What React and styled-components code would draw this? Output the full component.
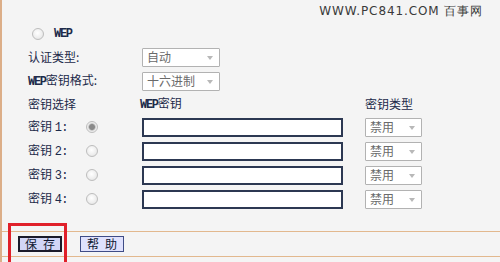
import React from "react";
import styled, { createGlobalStyle } from "styled-components";

const GlobalStyle = createGlobalStyle`
  html, body {
    margin: 0;
    padding: 0;
    background: #f4f4f4;
  }
`;

const keys = [1, 2, 3, 4];

function App() {
  return (
    <>
      <GlobalStyle />
      <Frame>
        <Watermark>WWW.PC841.COM 百事网</Watermark>
        <Form>
          <WepRow>
            <Radio />
            <Mono $bold>WEP</Mono>
          </WepRow>

          <Label $span={2}>认证类型:</Label>
          <Select $width={78}>
            <span>自动</span>
            <Arrow />
          </Select>
          <span />

          <Label $span={2}>
            <Mono $bold>WEP</Mono>密钥格式:
          </Label>
          <Select $width={78}>
            <span>十六进制</span>
            <Arrow />
          </Select>
          <span />

          <Label $span={2}>密钥选择</Label>
          <Label $shift={-2}>
            <Mono $bold>WEP</Mono>密钥
          </Label>
          <Label>密钥类型</Label>

          {keys.map((k) => (
            <React.Fragment key={k}>
              <Label>
                密钥 <Mono>{k}:</Mono>
              </Label>
              <Radio $checked={k === 1} />
              <TextInput />
              <Select $width={57}>
                <span>禁用</span>
                <Arrow />
              </Select>
            </React.Fragment>
          ))}
        </Form>
        <Footer>
          <Button $primary>保存</Button>
          <Button>帮助</Button>
        </Footer>
        <Highlight />
      </Frame>
    </>
  );
}

const Frame = styled.div`
  position: relative;
  height: 262px;
  border-left: 2px solid #dcae88;
  box-sizing: border-box;
  font-family: "Noto Sans CJK SC", "DejaVu Sans", sans-serif;
  font-size: 12px;
  color: #1c2a4a;
  overflow: hidden;
`;

const Watermark = styled.div`
  height: 23px;
  display: flex;
  align-items: center;
  justify-content: flex-end;
  padding-right: 17px;
  font-family: "DejaVu Sans", sans-serif;
  font-size: 12px;
  letter-spacing: 0.9px;
  color: #3a3a3a;
`;

const Form = styled.div`
  display: grid;
  grid-template-columns: 58px 56px 223px 1fr;
  grid-template-rows: 22px 24px 24px 22px 24px 24px 24px 24px;
  align-items: center;
  padding-left: 26px;
`;

const WepRow = styled.div`
  grid-column: 1 / -1;
  display: flex;
  align-items: center;
  gap: 10px;
  padding-left: 4px;
`;

const Mono = styled.span`
  font-family: "Liberation Mono", monospace;
  font-size: 12px;
  font-weight: ${(p) => (p.$bold ? "bold" : "normal")};
  letter-spacing: ${(p) => (p.$bold ? "-1.3px" : "-0.6px")};
`;

const Label = styled.span`
  grid-column: span ${(p) => p.$span || 1};
  white-space: nowrap;
  line-height: 1;
  margin-left: ${(p) => p.$shift || 0}px;
`;

const Radio = styled.span`
  width: 12px;
  height: 12px;
  box-sizing: border-box;
  border-radius: 50%;
  border: 1px solid #bdbdbd;
  background: ${(p) =>
    p.$checked
      ? "radial-gradient(circle, #8a8a8a 0 2.5px, #b8b8b8 3.2px, #e8e8e8 4px, #f6f6f6 6px)"
      : "radial-gradient(circle at 45% 40%, #ffffff 0, #ededed 60%, #dcdcdc 100%)"};
`;

const Select = styled.div`
  width: ${(p) => p.$width}px;
  height: 19px;
  box-sizing: border-box;
  display: flex;
  align-items: center;
  justify-content: space-between;
  padding: 0 6px 0 4px;
  background: #ffffff;
  border: 1px solid #b2b2b2;
  border-radius: 1px;
  color: #6a6a6a;
  font-size: 12px;
  line-height: 1;
`;

const Arrow = styled.i`
  width: 0;
  height: 0;
  border-left: 3.5px solid transparent;
  border-right: 3.5px solid transparent;
  border-top: 4px solid #b8b8b8;
  margin-top: 2px;
`;

const TextInput = styled.div`
  width: 201px;
  height: 19px;
  box-sizing: border-box;
  background: #ffffff;
  border: 2px solid #2c3852;
`;

const Footer = styled.div`
  position: absolute;
  left: 0;
  right: 0;
  top: 231px;
  height: 26px;
  box-sizing: border-box;
  border-top: 1px solid #e2b88e;
  border-bottom: 1px solid #e2b88e;
  display: flex;
  align-items: center;
  gap: 18px;
  padding-left: 16px;
`;

const Button = styled.div`
  width: 44px;
  height: 16px;
  box-sizing: border-box;
  display: flex;
  align-items: center;
  justify-content: center;
  padding-left: 6px;
  letter-spacing: 6px;
  background: ${(p) => (p.$primary ? "#d2d6f6" : "#dfe1fd")};
  border: ${(p) => (p.$primary ? "2px solid #1a1a2a" : "1px solid #3f4c86")};
  color: #101830;
  font-size: 12px;
  line-height: 1;
  white-space: nowrap;
`;

const Highlight = styled.div`
  position: absolute;
  left: 6px;
  top: 223px;
  width: 59px;
  height: 42px;
  box-sizing: border-box;
  border: 3px solid #e0202a;
  pointer-events: none;
`;

export default App;
